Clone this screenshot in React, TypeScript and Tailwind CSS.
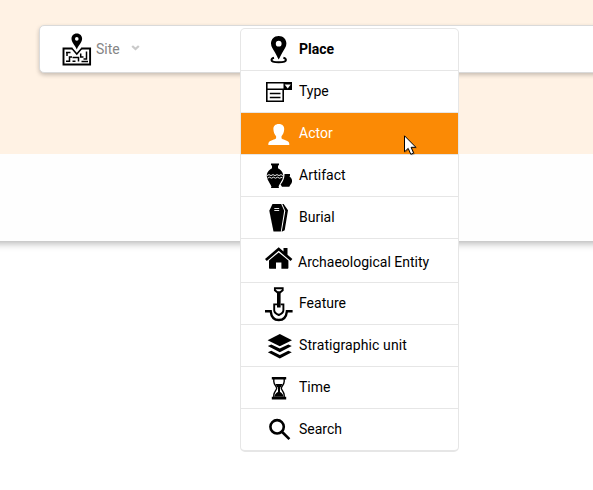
import type { ReactNode } from 'react';

const icons: Record<string, ReactNode> = {
  Place: (
    <>
      <path d="M10 28.7C7.9 29.2 7.5 30.2 7.5 31C7.5 32.5 10.2 33.3 14.7 33.3S21.9 32.5 21.9 31C21.9 30.2 21.5 29.2 19.4 28.7" fill="none" stroke="currentColor" strokeWidth="2" />
      <path fillRule="evenodd" d="M14.7 7C10 7 7 10.4 7 14.6C7 18 9.3 20.5 11 23.5C12.6 26.2 13.5 28.5 14.7 30.5C15.9 28.5 16.8 26.2 18.4 23.5C20.1 20.5 22.4 18 22.4 14.6C22.4 10.4 19.4 7 14.7 7ZM14.7 11.8A2.9 2.9 0 1 1 14.7 17.6A2.9 2.9 0 1 1 14.7 11.8Z" />
    </>
  ),
  Type: (
    <>
      <path d="M2.8 11.8H27.2V18.2H2.8ZM2.8 18.2H19.2V30.2H2.8Z" fill="none" stroke="currentColor" strokeWidth="1.6" />
      <path d="M19.5 11H28V19H19.5Z" />
      <path d="M20.6 13.4H26.8L23.7 17.4Z" fill="white" />
      <path d="M5.8 22.5H16.5M5.8 26.5H16.5" stroke="currentColor" strokeWidth="1.6" />
    </>
  ),
  Actor: (
    <path d="M14.8 11C11.2 11 9.3 13.2 9.4 16.2C9.5 19.2 10.5 21.5 12.1 23.2V25.3C11.3 26.7 6.2 27.3 4.8 29.3C4.3 30.2 4.3 31 4.3 32H25.3C25.3 31 25.3 30.2 24.8 29.3C23.4 27.3 18.3 26.7 17.5 25.3V23.2C19.1 21.5 20.1 19.2 20.2 16.2C20.3 13.2 18.4 11 14.8 11Z" />
  ),
  Artifact: (
    <>
      <path d="M7 8.5H15V10L14 10.8V13.2C16 14.4 19 16.5 19.2 20.2C19.4 24.8 15.7 28 14.6 31.5L15 33H7L7.4 31.5C6.3 28 2.6 24.8 2.8 20.2C3 16.5 6 14.4 8 13.2V10.8L7 10Z" />
      <path d="M3 20.6L5 19.6L7 20.6L9 19.6L11 20.6L13 19.6L15 20.6L17 19.6L19 20.6M3.5 23.2L5.5 22.2L7.5 23.2L9.5 22.2L11.5 23.2L13.5 22.2L15.5 23.2L18.5 22.2" fill="none" stroke="white" strokeWidth=".9" />
      <path d="M20.5 19H26V20.5L25.6 21.8C27.3 22.8 28.3 24.4 28 26.8C27.7 29 26 29.8 25.3 31.8H18C17.7 30.9 17.1 30.2 16.6 29.4C18.7 26.8 20.6 24 20.5 19Z" />
    </>
  ),
  Burial: (
    <>
      <path d="M8.5 7H17.2L20.2 13.8L16.8 34.5H9.5L5.3 13.7Z" />
      <path d="M18.3 7H19.6L24 13.2L20.7 33.2L17.7 34.7L21.3 14Z" />
      <path d="M10.3 11.5H15.2M10.3 13.5H15.2" stroke="white" strokeWidth=".9" />
    </>
  ),
  'Archaeological Entity': (
    <>
      <path d="M14.7 8.3L1 20L2.8 22L14.7 11.8L26.6 22L28.4 20L23.5 15.8V9H19.5V12.5Z" />
      <path d="M14.7 13.4L5 21.6V28.7C5 29.3 5.4 29.7 6 29.7H12V23.5H17.4V29.7H23.4C24 29.7 24.4 29.3 24.4 28.7V21.6Z" />
    </>
  ),
  Feature: (
    <>
      <path d="M10.9 5.3H18.7V7.2L16.3 9.3H13.3L10.9 7.2Z" fill="none" stroke="currentColor" strokeWidth="1.9" />
      <path d="M13 9.3H16.6V24.5H13Z" />
      <path d="M13 21.4H10.2V27.3C10.2 30 12.3 31 14.8 32C17.3 31 19.4 30 19.4 27.3V21.4H16.6" fill="none" stroke="currentColor" strokeWidth="1.9" />
      <path d="M1 28.3H6.7C7.3 33.8 10.2 37 14.8 37S22.3 33.8 22.9 28.3H28.6" fill="none" stroke="currentColor" strokeWidth="2.4" />
    </>
  ),
  'Stratigraphic unit': (
    <>
      <path d="M15.8 9L28 15.2L15.8 21.3L3.6 15.2Z" />
      <path d="M3.8 21L7.3 19.4L15.8 23.6L24.3 19.4L27.8 21L15.8 27.2Z" />
      <path d="M3.8 27.3L7.3 25.7L15.8 29.9L24.3 25.7L27.8 27.3L15.8 33.5Z" />
    </>
  ),
  Time: (
    <>
      <path d="M7.8 10H22.2V12.6H7.8ZM7.8 29.8H22.2V32.4H7.8Z" />
      <path d="M9.8 12V14.5C9.8 17.5 12.7 19.6 12.7 21.2S9.8 24.9 9.8 27.9V30M20.2 12V14.5C20.2 17.5 17.3 19.6 17.3 21.2S20.2 24.9 20.2 27.9V30" fill="none" stroke="currentColor" strokeWidth="1.4" />
      <path d="M11.5 17H18.5L16.8 20.3H13.2ZM14 20H16V25H14ZM15 24C16.3 25.3 19.2 26 19.5 29.8H10.5C10.8 26 13.7 25.3 15 24Z" />
    </>
  ),
  Search: (
    <path d="M18.2 23L25.4 30.2M19.8 17.8A6.7 6.7 0 1 1 6.4 17.8A6.7 6.7 0 1 1 19.8 17.8Z" fill="none" stroke="currentColor" strokeWidth="2.6" />
  ),
};

const rowStyles: Record<string, string> = {
  Place: 'h-[42px] font-bold',
  Actor: 'h-[42px] bg-[#fb8a05] text-white',
  'Archaeological Entity': 'h-[44px]',
  'Stratigraphic unit': 'h-[42px] tracking-[0.1px]',
};

function MenuItem({ label }: { label: string }) {
  const tall = label === 'Archaeological Entity';
  return (
    <li className={`flex border-b border-[#e6e6e6] pl-[23px] last:h-[41px] last:border-b-0 ${rowStyles[label] ?? 'h-[42px]'}`}>
      <svg className="h-[41px] w-[30px] shrink-0" viewBox="0 0 30 41" fill="currentColor">{icons[label]}</svg>
      <span className={`whitespace-nowrap ${tall ? 'ml-1 leading-[46px]' : 'ml-[5px] leading-[41px]'}`}>{label}</span>
    </li>
  );
}

function SiteIcon() {
  return (
    <svg className="h-[34px] w-[30px] shrink-0" viewBox="0 0 30 34">
      <path d="M10.5 15.5H1.5V31.5H28.1V15.5H19.1" fill="none" stroke="black" strokeWidth="1.9" />
      <path d="M10 15.5L14.8 21L19.6 15.5" fill="none" stroke="black" strokeWidth="1.5" />
      <path d="M4 19.5H8.5M5 19.5V23M4 28.3H7.5V24H10M10.5 24.5H16.5V28.5M10.5 28.3H13.5M18.7 20.5V24H21.5M24.5 18.5V26H21.5M19.5 28.5H26" fill="none" stroke="black" strokeWidth="1.5" />
      <path fillRule="evenodd" d="M14.8 .5C11.4 .5 9.5 3 9.5 5.8C9.5 9.2 12.8 12 14.8 16.5C16.8 12 20.1 9.2 20.1 5.8C20.1 3 18.2 .5 14.8 .5ZM14.8 4.1A1.8 1.8 0 1 1 14.8 7.7A1.8 1.8 0 1 1 14.8 4.1Z" />
    </svg>
  );
}

export default function App() {
  return (
    <div className="relative h-[490px] w-[593px] overflow-hidden bg-white font-['Roboto',sans-serif] text-[14px] text-black">
      <header className="-mx-5 h-[241px] bg-[#fefefe] shadow-[0_2px_8px_rgba(0,0,0,0.32)]">
        <div className="h-[154px] bg-[#fff2e4] pt-[25px] pl-[59px]">
          <div className="flex h-[48px] w-[600px] rounded-[5px] border border-[#dadada] bg-white pt-[7px] pl-[22px] shadow-[0_2px_4px_rgba(0,0,0,0.22)]">
            <SiteIcon />
            <span className="ml-1 leading-[32px] text-[#858585]">Site</span>
            <svg className="mt-[11px] ml-[11px] h-[8px] w-[9px]" viewBox="0 0 9 8">
              <path d="M1.2 2L4.5 5L7.8 2" fill="none" stroke="#cacaca" strokeWidth="2.3" />
            </svg>
          </div>
        </div>
      </header>
      <ul className="absolute top-[28px] left-[240px] w-[219px] overflow-hidden rounded-[5px] border border-b-2 border-[#e6e6e6] bg-white">
        {Object.keys(icons).map((label) => <MenuItem key={label} label={label} />)}
      </ul>
      <svg className="absolute top-[134px] left-[403px] h-[24px] w-[16px]" viewBox="0 0 16 24">
        <path d="M2.5 3V19L6.2 15.4L8.9 21.5L12 20.1L9.4 14.3H14Z" fill="black" opacity=".25" />
        <path d="M1.5 1.8V17.8L5.2 14.4L7.8 20.3L10.6 19.1L8.1 13.3H12.9Z" fill="white" stroke="black" strokeWidth="1" />
      </svg>
    </div>
  );
}
